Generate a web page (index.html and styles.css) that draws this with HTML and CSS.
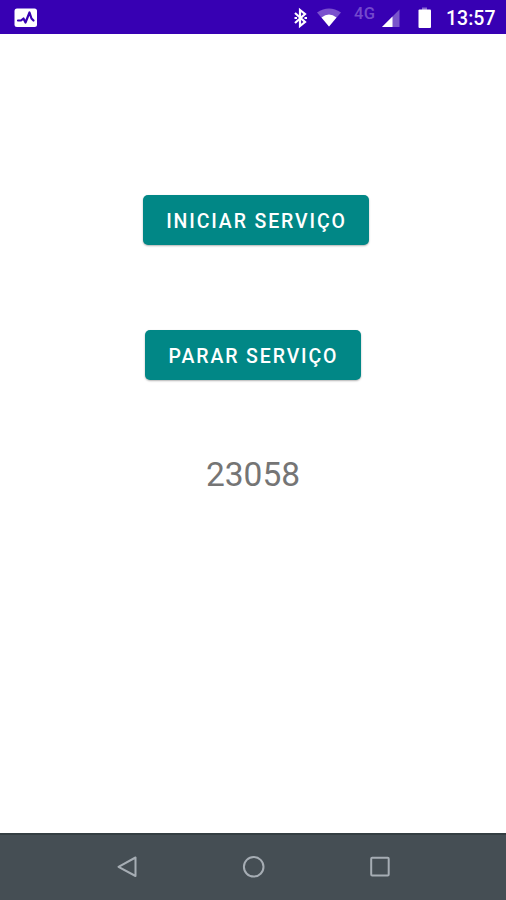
FILE: index.html
```html
<!DOCTYPE html>
<html lang="pt-BR">
<head>
    <meta charset="UTF-8">
    <meta name="viewport" content="width=device-width, initial-scale=1.0">
    <title>Serviço</title>
    <link rel="stylesheet" href="styles.css">
</head>
<body>
    <div class="status-bar">
        <svg class="icon-app" width="24" height="20" viewBox="0 0 24 20">
            <rect x="0.5" y="0.5" width="22.5" height="18.5" rx="2.5" fill="#fff"/>
            <path d="M4 12.500h3l2.500-2 2 4L15.500 4.500l2 6 2 2" fill="none" stroke="#3700b3" stroke-width="2.200" stroke-linecap="round" stroke-linejoin="round"/>
        </svg>
        <!-- Bluetooth, wifi, signal, battery -->
        <svg class="icon-bluetooth" width="16" height="22" viewBox="0 0 16 22">
            <path d="M2 6l10 9-5 4V3l5 4-10 9" fill="none" stroke="#fff" stroke-width="2.200"/>
            <path d="M1.500 11h2.500M11.500 11h2.500" fill="none" stroke="#fff" stroke-width="2"/>
        </svg>
        <svg class="icon-wifi" width="24" height="20" viewBox="0 0 24 20">
            <path d="M12 19.500L0 5.500Q12-2.500 24 5.500z" fill="#7a50cd"/>
            <path d="M12 19.500L4.500 10.500Q12 4.500 19.500 10.500z" fill="#fff"/>
        </svg>
        <span class="network">4G</span>
        <svg class="icon-signal" width="18" height="18" viewBox="0 0 18 18">
            <path d="M0 18L17.500 0.500v17.500z" fill="#7a55cb"/>
            <path d="M0 18L10.500 7.500v10.500z" fill="#fff"/>
        </svg>
        <svg class="icon-battery" width="14" height="22" viewBox="0 0 14 22">
            <path d="M4 0.500h5v3h-5z" fill="#8766d1"/>
            <rect x="0.500" y="2.500" width="12.500" height="18.500" rx="1" fill="#fff"/>
        </svg>
        <span class="clock">13:57</span>
    </div>

    <div class="content">
        <button class="button-start" type="button">INICIAR SERVIÇO</button>
        <button class="button-stop" type="button">PARAR SERVIÇO</button>
        <div class="counter">23058</div>
    </div>

    <div class="nav-bar">
        <svg width="24" height="24" viewBox="0 0 24 24">
            <path d="M19.500 2.500v18.500L2.500 11.800z"/>
        </svg>
        <svg width="24" height="24" viewBox="0 0 24 24">
            <circle cx="11.700" cy="11.800" r="9.800"/>
        </svg>
        <svg width="24" height="24" viewBox="0 0 24 24">
            <rect x="3.200" y="2.800" width="17.500" height="17.700" rx="1"/>
        </svg>
    </div>
</body>
</html>
```

FILE: styles.css
```css
* {
    box-sizing: border-box;
}
body {
    display: flex;
    flex-direction: column;
    height: 900px;
    margin: 0;
    background-color: #fff;
    font-family: Roboto, sans-serif;
}
.status-bar {
    display: flex;
    align-items: flex-start;
    height: 34px;
    padding-left: 14px;
    background-color: #3700b3;
    color: #fff;
}
.icon-app {
    margin-top: 8px;
}
.icon-bluetooth {
    margin-top: 7px;
    margin-left: 255px;
}
.icon-wifi {
    margin-top: 7px;
    margin-left: 8px;
}
.network {
    width: 22px;
    margin-top: 5px;
    margin-left: 13px;
    color: #7449cd;
    font-size: 16.5px;
    font-weight: 500;
    letter-spacing: 0.3px;
    line-height: 18px;
}
.icon-signal {
    margin-top: 9px;
    margin-left: 6px;
}
.icon-battery {
    margin-top: 7px;
    margin-left: 18px;
}
.clock {
    margin-top: 7px;
    margin-left: 14px;
    font-size: 19.5px;
    font-weight: 500;
    line-height: 24px;
}
.content {
    display: flex;
    flex: 1;
    flex-direction: column;
    align-items: center;
    padding-top: 161px;
}
button {
    height: 50px;
    padding: 2px 0 0 1px;
    border: none;
    border-radius: 5px;
    background-color: #018786;
    box-shadow: 0 1px 2px rgba(0, 0, 0, 0.3);
    color: #fff;
    font-family: inherit;
    font-size: 19.5px;
    font-weight: 500;
    letter-spacing: 1.88px;
    white-space: nowrap;
}
.button-start {
    width: 226px;
    margin-left: 6px;
}
.button-stop {
    width: 216px;
    margin-top: 85px;
}
.counter {
    margin-top: 75px;
    color: #757575;
    font-size: 33.5px;
    line-height: 40px;
}
.nav-bar {
    display: flex;
    gap: 102px;
    height: 67px;
    padding-top: 20px;
    padding-left: 116px;
    border-top: 2px solid #343e42;
    background-color: #454e54;
}
.nav-bar svg {
    fill: none;
    stroke: #a6adb4;
    stroke-width: 2;
    stroke-linejoin: round;
}
```
